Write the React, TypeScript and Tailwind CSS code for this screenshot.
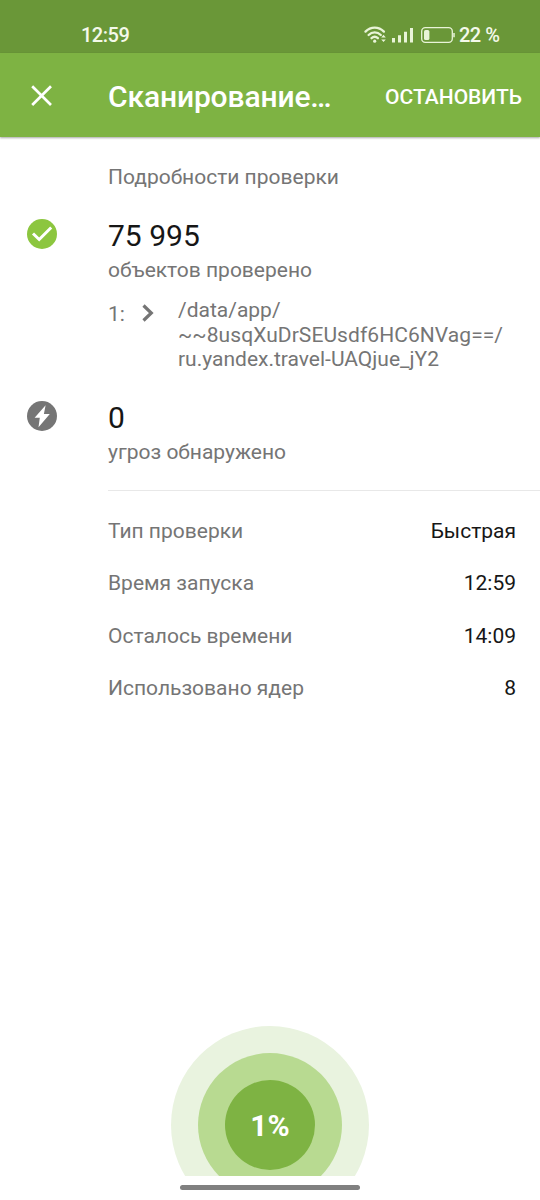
const details = [
  { label: 'Тип проверки', value: 'Быстрая' },
  { label: 'Время запуска', value: '12:59' },
  { label: 'Осталось времени', value: '14:09' },
  { label: 'Использовано ядер', value: '8' },
];

function StatusBar() {
  return (
    <div className="flex h-[53px] items-center bg-[#6a9738] pt-[17px] pl-[81px] text-[20px] font-medium leading-[36px] tracking-[-0.5px] text-[#f4f9ea]">
      <span className="w-[283px]">12:59</span>
      <svg className="h-[20px] w-[92px] shrink-0" viewBox="0 0 92 20" fill="none">
        <g stroke="#e9f4d8" strokeWidth="2.3" strokeLinecap="round">
          <path d="M1.5 6.6C6.7 1.2 14.7 1.2 19.9 6.6" />
          <path d="M4.6 10C8.1 6.5 13.3 6.5 16.8 10" />
          <path d="M7.5 13.2C9.4 11.4 12 11.4 13.9 13.2" />
        </g>
        <circle cx="10.7" cy="16.2" r="1.6" fill="#e9f4d8" />
        <path d="m17.2 12.4 2.3-2.7 2.3 2.7zM17.2 14.4l2.3 2.7 2.3-2.7z" fill="#e9f4d8" />
        <path d="M28 13h3v4.5h-3zM34 10.3h3v7.2h-3zM40 6.8h3v10.7h-3zM46 3h3v14.5h-3z" fill="#e9f4d8" />
        <rect x="57.7" y="2.7" width="30.6" height="14.6" rx="3.6" stroke="#e9f4d8" strokeWidth="1.3" />
        <rect x="60" y="5" width="5.4" height="10" rx="1.6" fill="#e9f4d8" />
        <path d="M90 8v4.3" stroke="#e9f4d8" strokeWidth="1.5" />
      </svg>
      <span className="ml-[3px] whitespace-nowrap">22 %</span>
    </div>
  );
}

function AppBar() {
  return (
    <header className="flex h-[84px] items-center bg-[#7eb343] pr-[18px] pl-[31px] text-white shadow-[0_1px_2px_rgba(0,0,0,0.35)]">
      <button aria-label="Закрыть" className="mr-[56px] h-[21px] w-[21px] shrink-0">
        <svg className="block" width="21" height="21" viewBox="0 0 21 21" stroke="currentColor" strokeWidth="2.7">
          <path d="M1.2 1.2 20 20M20 1.2 1.2 20" />
        </svg>
      </button>
      <h1 className="mt-[3px] flex-1 whitespace-nowrap text-[30px] font-medium leading-[36px] tracking-[-0.14px]">Сканирование…</h1>
      <button className="mt-[3px] whitespace-nowrap text-[21px] font-medium leading-[24px]">ОСТАНОВИТЬ</button>
    </header>
  );
}

function CheckIcon() {
  return (
    <svg className="h-[30px] w-[30px]" viewBox="0 0 30 30">
      <circle cx="15" cy="15" r="15" fill="#8cc63f" />
      <path d="m6 14.5 6.2 6L24.2 8.5" fill="none" stroke="#fff" strokeWidth="3" />
    </svg>
  );
}

function ThreatIcon() {
  return (
    <svg className="h-[30px] w-[30px]" viewBox="0 0 30 30">
      <circle cx="15" cy="15" r="15" fill="#757575" />
      <path d="M18.6 4.2 7.6 16.7h5.2L11.5 26.3 22.8 13h-5.9z" fill="#fff" />
    </svg>
  );
}

function ProgressDial() {
  return (
    <div className="flex h-[150px] justify-center overflow-hidden">
      <div className="flex h-[198px] w-[198px] shrink-0 items-center justify-center rounded-full bg-[#e9f3df]">
        <div className="flex h-[144px] w-[144px] items-center justify-center rounded-full bg-[#b8da91]">
          <div className="flex h-[90px] w-[90px] items-center justify-center rounded-full bg-[#7eb343] text-[30px] font-bold leading-[36px] text-white">
            <span className="mt-[2px]">1%</span>
          </div>
        </div>
      </div>
    </div>
  );
}

export default function App() {
  return (
    <div className="flex h-[1200px] w-[540px] flex-col bg-white font-['Roboto',sans-serif] text-[21px] leading-[24px] text-[#757575]">
      <StatusBar />
      <AppBar />
      <main className="flex flex-1 flex-col">
        <h2 className="mt-[28px] ml-[108px]">Подробности проверки</h2>
        <section className="mt-[29px] flex">
          <div className="w-[108px] shrink-0 pt-[1px] pl-[27px]"><CheckIcon /></div>
          <div>
            <p className="text-[30px] leading-[36px] text-[#161616]">75 995</p>
            <p className="mt-[4px]">объектов проверено</p>
            <div className="mt-[16px] flex">
              <span className="mt-[4px] w-[34px]">1:</span>
              <svg className="mt-[6px] mr-[24px] h-[18px] w-[12px]" viewBox="0 0 12 18" fill="none" stroke="#757575" strokeWidth="3.2">
                <path d="m1.5 1.5 7.8 7.5-7.8 7.5" />
              </svg>
              <p className="leading-[24.5px]">
                /data/app/<br /><span className="tracking-[0.07px]">~~8usqXuDrSEUsdf6HC6NVag==/</span><br />ru.yandex.travel-UAQjue_jY2
              </p>
            </div>
          </div>
        </section>
        <section className="mt-[28.5px] flex">
          <div className="w-[108px] shrink-0 pt-[0.5px] pl-[27px]"><ThreatIcon /></div>
          <div>
            <p className="text-[30px] leading-[36px] text-[#161616]">0</p>
            <p className="mt-[4px]">угроз обнаружено</p>
          </div>
        </section>
        <hr className="mt-[25.5px] ml-[108px] border-t border-[#e8e8e8]" />
        <dl className="mt-[14px] mr-[24px] ml-[108px]">
          {details.map(({ label, value }) => (
            <div key={label} className="flex h-[52.5px] items-center justify-between">
              <dt>{label}</dt>
              <dd className="text-[#161616]">{value}</dd>
            </div>
          ))}
        </dl>
      </main>
      <ProgressDial />
      <div className="flex h-[24px] justify-center pt-[9px]">
        <div className="h-[5px] w-[180px] rounded-full bg-[#808080]" />
      </div>
    </div>
  );
}
